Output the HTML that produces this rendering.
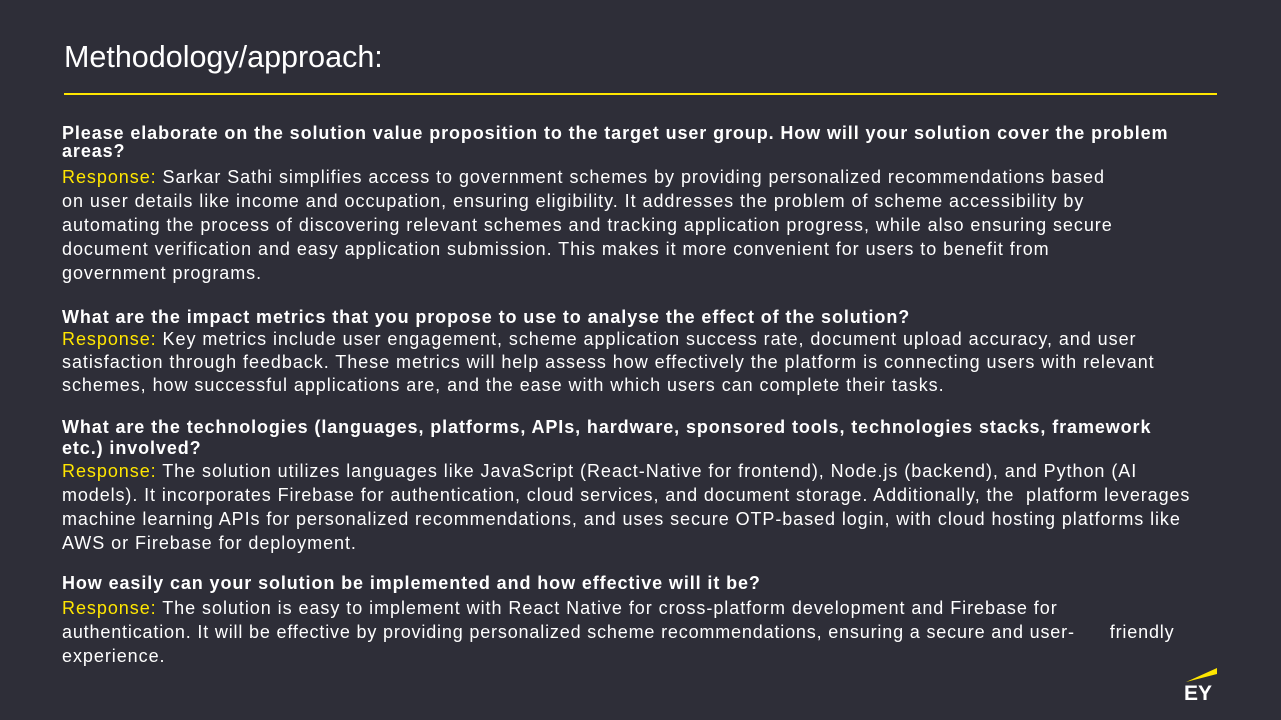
<!DOCTYPE html>
<html><head><meta charset="utf-8"><style>
html,body{margin:0;padding:0;}
body{width:1281px;height:720px;background:#2e2e38;position:relative;overflow:hidden;font-family:"Liberation Sans",Arial,sans-serif;color:#fff;}
.t{position:absolute;left:64px;top:40px;font-size:30.5px;font-family:"Liberation Sans",sans-serif;}
.rule{position:absolute;left:64px;top:93px;width:1153px;height:2px;background:#ffe600;}
.l{position:absolute;left:62px;font-size:18px;line-height:24px;white-space:nowrap;letter-spacing:0.95px;}
.b{font-weight:bold;font-size:18px;letter-spacing:0.9px;}
.y{color:#ffe600;}
</style></head><body>
<div class="t">Methodology/approach:</div>
<div class="rule"></div>

<div class="l b" style="top:121px">Please elaborate on the solution value proposition to the target user group. How will your solution cover the problem</div>
<div class="l b" style="top:139px">areas?</div>
<div class="l" style="top:165px"><span class="y">Response:</span> Sarkar Sathi simplifies access to government schemes by providing personalized recommendations based</div>
<div class="l" style="top:189px">on user details like income and occupation, ensuring eligibility. It addresses the problem of scheme accessibility by</div>
<div class="l" style="top:213px">automating the process of discovering relevant schemes and tracking application progress, while also ensuring secure</div>
<div class="l" style="top:237px">document verification and easy application submission. This makes it more convenient for users to benefit from</div>
<div class="l" style="top:261px">government programs.</div>

<div class="l b" style="top:305px">What are the impact metrics that you propose to use to analyse the effect of the solution?</div>
<div class="l" style="top:327px"><span class="y">Response:</span> Key metrics include user engagement, scheme application success rate, document upload accuracy, and user</div>
<div class="l" style="top:350px">satisfaction through feedback. These metrics will help assess how effectively the platform is connecting users with relevant</div>
<div class="l" style="top:373px">schemes, how successful applications are, and the ease with which users can complete their tasks.</div>

<div class="l b" style="top:415px">What are the technologies (languages, platforms, APIs, hardware, sponsored tools, technologies stacks, framework</div>
<div class="l b" style="top:436px">etc.) involved?</div>
<div class="l" style="top:459px"><span class="y">Response:</span> The solution utilizes languages like JavaScript (React-Native for frontend), Node.js (backend), and Python (AI</div>
<div class="l" style="top:483px;letter-spacing:0.9px">models). It incorporates Firebase for authentication, cloud services, and document storage. Additionally, the&nbsp; platform leverages</div>
<div class="l" style="top:507px;letter-spacing:0.92px">machine learning APIs for personalized recommendations, and uses secure OTP-based login, with cloud hosting platforms like</div>
<div class="l" style="top:531px">AWS or Firebase for deployment.</div>

<div class="l b" style="top:571px">How easily can your solution be implemented and how effective will it be?</div>
<div class="l" style="top:596px"><span class="y">Response:</span> The solution is easy to implement with React Native for cross-platform development and Firebase for</div>
<div class="l" style="top:620px;letter-spacing:0.83px">authentication. It will be effective by providing personalized scheme recommendations, ensuring a secure and user-&nbsp;&nbsp;&nbsp;&nbsp;&nbsp; friendly</div>
<div class="l" style="top:644px">experience.</div>

<svg style="position:absolute;left:1180px;top:664px" width="42" height="40" viewBox="0 0 42 40">
<polygon points="6,18 37,4 37,10" fill="#ffe600"/>
<text x="4" y="36" font-family="Liberation Sans,Arial,sans-serif" font-weight="bold" font-size="21" fill="#fff">EY</text>
</svg>
</body></html>
